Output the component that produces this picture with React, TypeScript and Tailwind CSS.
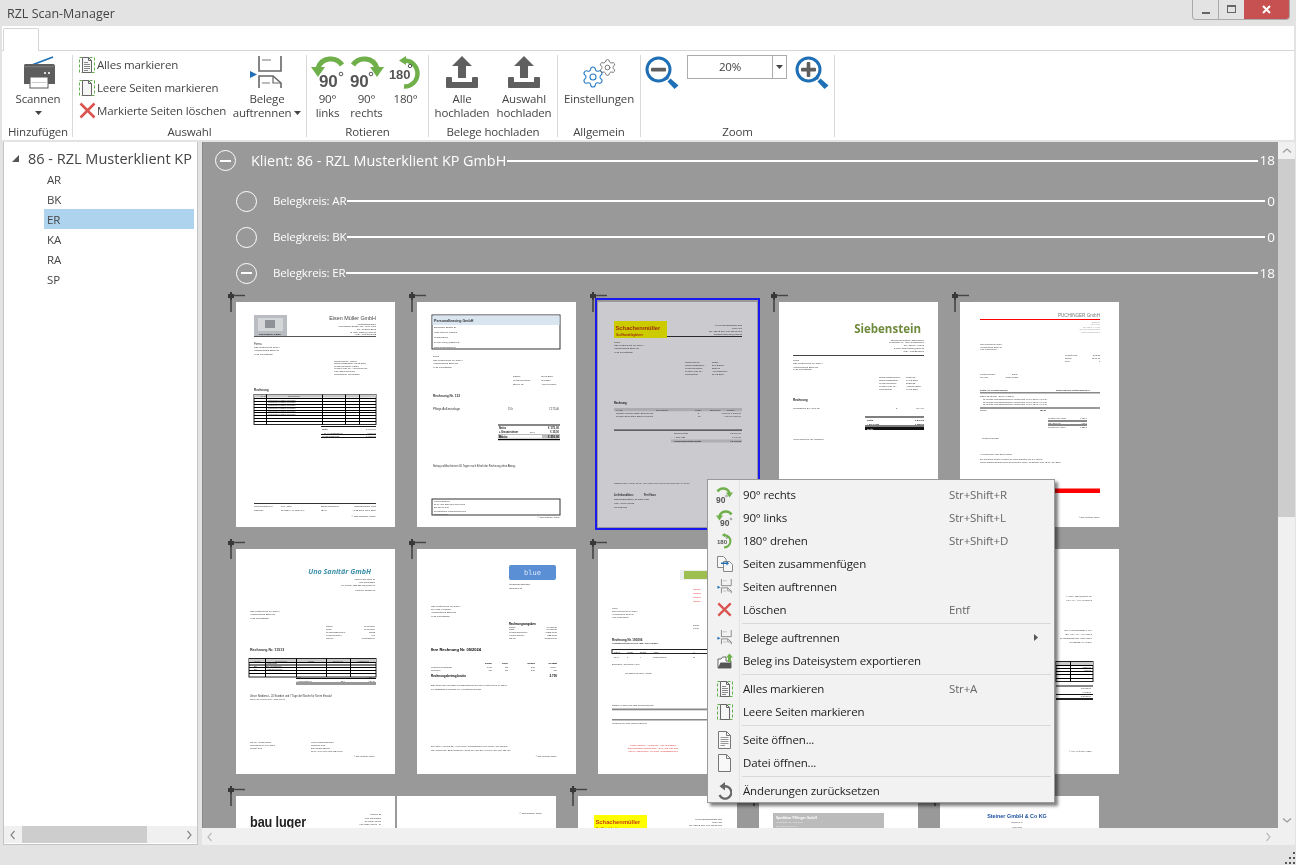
import { ReactNode } from "react";
import { Settings } from "lucide-react";

const Caret = ({ className = "" }: { className?: string }) => (
  <svg width="7" height="4" viewBox="0 0 7 4" className={className}>
    <polygon points="0,0 7,0 3.5,4" fill="#444" />
  </svg>
);

/* ---------- icons ---------- */

const ScanIcon = () => (
  <svg width="32" height="33" viewBox="0 0 32 33">
    <path d="M9 9 L30 1" stroke="#1e6fb5" strokeWidth="1.8" />
    <path d="M2 8 H30 A2 2 0 0 1 32 10 V28 H1 V10 A2 2 0 0 1 2 8Z" fill="#5d5d5d" />
    <rect x="1" y="10" width="30" height="1.3" fill="#777" />
    <rect x="7" y="21" width="18" height="11" fill="#fff" stroke="#5d5d5d" />
    <rect x="21" y="16" width="2" height="2" fill="#ddd" />
    <rect x="25" y="16" width="2" height="2" fill="#ddd" />
    <rect x="8.5" y="26" width="15" height="1" fill="#ccc" />
  </svg>
);

const RotLeft = ({ size = 34 }: { size?: number }) => (
  <svg width={size} height={(size * 32) / 34} viewBox="0 0 34 32" className="overflow-visible">
    <path d="M31 9 A13.5 13.5 0 0 0 7 12" stroke="#6fb04a" strokeWidth="5" fill="none" />
    <polygon points="0,11 14,11 7,21" fill="#6fb04a" />
    <text x="8" y="31" fontSize="17" fontWeight="700" fill="#555" fontFamily="'Liberation Sans',sans-serif">90</text>
    <circle cx="30" cy="18" r="1.8" stroke="#555" fill="none" />
  </svg>
);

const RotRight = ({ size = 34 }: { size?: number }) => (
  <svg width={size} height={(size * 32) / 34} viewBox="0 0 34 32" className="overflow-visible">
    <path d="M3 9 A13.5 13.5 0 0 1 27 12" stroke="#6fb04a" strokeWidth="5" fill="none" />
    <polygon points="20,11 34,11 27,21" fill="#6fb04a" />
    <text x="0" y="31" fontSize="17" fontWeight="700" fill="#555" fontFamily="'Liberation Sans',sans-serif">90</text>
    <circle cx="21" cy="18" r="1.8" stroke="#555" fill="none" />
  </svg>
);

const Rot180 = ({ size = 34 }: { size?: number }) => (
  <svg width={size} height={(size * 32) / 34} viewBox="0 0 34 32" className="overflow-visible">
    <path d="M16 4.5 A13 13 0 0 1 15 30.5" stroke="#6fb04a" strokeWidth="4.5" fill="none" />
    <polygon points="10,4.5 17,0 17,9" fill="#6fb04a" />
    <text x="0" y="23" fontSize="13" fontWeight="700" fill="#555" fontFamily="'Liberation Sans',sans-serif">180</text>
    <circle cx="21" cy="10" r="1.7" stroke="#555" fill="none" />
  </svg>
);

const SplitIcon = ({ size = 36 }: { size?: number }) => (
  <svg width={size} height={(size * 32) / 36} viewBox="0 0 36 32">
    <path d="M10 0 V15 H32 V0" stroke="#666" strokeWidth="1.6" fill="none" />
    <path d="M13 4 H22" stroke="#bbb" strokeWidth="2" />
    <polygon points="1,15 8,18.5 1,22" fill="#1e6fb5" />
    <path d="M10 32 V20 H24 L32 27 V32" stroke="#666" strokeWidth="1.6" fill="none" />
    <path d="M24 20 V27 H32" stroke="#666" strokeWidth="1.2" fill="none" />
    <path d="M13 27 H21" stroke="#bbb" strokeWidth="2" />
  </svg>
);

const UploadIcon = () => (
  <svg width="32" height="33" viewBox="0 0 32 33">
    <polygon points="16,0 26,10 20,10 20,22 12,22 12,10 6,10" fill="#5f5f5f" />
    <path d="M1 21 H5 A1 1 0 0 1 6 22 V26 H26 V22 A1 1 0 0 1 27 21 H31 A1 1 0 0 1 32 22 V31 A1 1 0 0 1 31 32 H1 A1 1 0 0 1 0 31 V22 A1 1 0 0 1 1 21Z" fill="#5f5f5f" />
  </svg>
);

const ZoomIcon = ({ plus }: { plus?: boolean }) => (
  <svg width="34" height="33" viewBox="0 0 34 33">
    <circle cx="13.5" cy="13.5" r="11.5" stroke="#1e6fb5" strokeWidth="3" fill="#fff" />
    <path d="M21 21 L23 23" stroke="#1e6fb5" strokeWidth="3" />
    <path d="M22.5 25.5 L25.5 22.5 L33.5 29.5 L29.5 33Z" fill="#1e6fb5" />
    <rect x="6" y="11.8" width="15" height="3.6" rx="1" fill="#5f5f5f" />
    {plus && <rect x="11.7" y="6" width="3.6" height="15" rx="1" fill="#5f5f5f" />}
  </svg>
);

const CrossIcon = ({ size = 17 }: { size?: number }) => (
  <svg width={size} height={size} viewBox="0 0 17 17">
    <path d="M1.5 1.5 L15.5 15.5 M15.5 1.5 L1.5 15.5" stroke="#d9534f" strokeWidth="2.6" />
  </svg>
);

const PageIcon = ({ lines, marked }: { lines?: boolean; marked?: boolean }) => (
  <svg width="16" height="18" viewBox="0 0 16 18">
    {marked && <rect x="0.5" y="1.5" width="15" height="15" fill="none" stroke="#5fb04a" strokeDasharray="3 2" />}
    <path d="M3.5 1.5 H9.5 L12.5 4.5 V16.5 H3.5Z" fill="#f6f6f6" stroke="#666" />
    <path d="M9.5 1.5 V4.5 H12.5" fill="none" stroke="#666" />
    {lines && <path d="M5 6.5 H9 M5 8.5 H11 M5 10.5 H11 M5 12.5 H11 M5 14.5 H9" stroke="#888" />}
  </svg>
);

const BigPage = ({ lines }: { lines?: boolean }) => (
  <svg width="15" height="18" viewBox="0 0 15 18">
    <path d="M1.5 0.5 H9.5 L13.5 4.5 V17.5 H1.5Z" fill="#f8f8f8" stroke="#777" />
    <path d="M9.5 0.5 V4.5 H13.5" fill="none" stroke="#777" />
    {lines && <path d="M3.5 6.5 H11.5 M3.5 8.5 H11.5 M3.5 10.5 H11.5 M3.5 12.5 H11.5 M3.5 14.5 H8" stroke="#999" />}
  </svg>
);

const MergeIcon = () => (
  <svg width="16" height="16" viewBox="0 0 16 16">
    <path d="M0.5 0.5 H6.5 L9 3 V11.5 H0.5Z" fill="#f6f6f6" stroke="#888" />
    <path d="M6.5 5.5 H12.5 L15.5 8.5 V15.5 H6.5Z" fill="#f6f6f6" stroke="#888" />
    <rect x="4" y="6.5" width="6" height="1.5" fill="#1e6fb5" />
    <polygon points="9.5,5 12,7.2 9.5,9.5" fill="#1e6fb5" />
  </svg>
);

const ExportIcon = () => (
  <svg width="16" height="16" viewBox="0 0 16 16">
    <path d="M1 6 H4 L5.5 4 H9 V8 H14 V15 H1Z" fill="#fff" stroke="#666" />
    <path d="M1 15 L3.5 9.5 H14 V15Z" fill="#555" />
    <polygon points="12.5,0.5 16,4.5 14,4.5 14,9 11,9 11,4.5 9,4.5" fill="#6fb04a" />
  </svg>
);

const UndoIcon = () => (
  <svg width="15" height="18" viewBox="0 0 15 18">
    <path d="M6.5 4.5 A6.2 6.2 0 1 1 2.5 13" stroke="#666" strokeWidth="2.3" fill="none" />
    <polygon points="8,0 8,8.5 2.5,4.2" fill="#666" />
  </svg>
);

/* ---------- ribbon ---------- */

const RibbonGroup = ({ label, width, children }: { label: string; width: string; children: ReactNode }) => (
  <>
    <div className={`${width} flex flex-col shrink-0`}>
      <div className="h-[70px] flex">{children}</div>
      <div className="h-[16px] leading-[16px] text-center text-[#444]">{label}</div>
    </div>
    <div className="w-px h-[82px] bg-[#d9d9d9] shrink-0" />
  </>
);

const LargeButton = ({ icon, lines, width, caret }: { icon: ReactNode; lines: string[]; width: string; caret?: boolean }) => (
  <div className={`${width} flex flex-col items-center shrink-0`}>
    <div className="h-[37px] flex items-start justify-center pt-px">{icon}</div>
    {lines.map((l, i) => (
      <div key={l} className="leading-[14px] text-[#444] whitespace-nowrap flex items-center gap-[3px]">
        {l}
        {caret && i === lines.length - 1 && <Caret />}
      </div>
    ))}
  </div>
);

const SmallButton = ({ icon, label }: { icon: ReactNode; label: string }) => (
  <div className="h-[23px] flex items-center gap-[1px] text-[#444] whitespace-nowrap">
    <div className="w-[18px] flex justify-center">{icon}</div>
    {label}
  </div>
);

const Ribbon = () => (
  <div className="h-[90px] border-t border-[#d6d6d6] flex pt-[4px] pl-[2px]">
    <RibbonGroup label="Hinzufügen" width="w-[68px]">
      <div className="w-full flex flex-col items-center">
        <div className="h-[37px] flex items-start pt-px pl-[2px]">
          <ScanIcon />
        </div>
        <div className="leading-[14px] text-[#444]">Scannen</div>
        <Caret className="mt-[5px]" />
      </div>
    </RibbonGroup>
    <RibbonGroup label="Auswahl" width="w-[233px]">
      <div className="pl-[5px] w-[165px] -mt-[2px]">
        <SmallButton icon={<PageIcon lines marked />} label="Alles markieren" />
        <SmallButton icon={<PageIcon marked />} label="Leere Seiten markieren" />
        <SmallButton icon={<CrossIcon />} label="Markierte Seiten löschen" />
      </div>
      <LargeButton width="w-[56px] ml-[1px]" icon={<SplitIcon />} lines={["Belege", "auftrennen"]} caret />
    </RibbonGroup>
    <RibbonGroup label="Rotieren" width="w-[121px]">
      <div className="flex pl-[2px] gap-[2px]">
        <LargeButton width="w-[37px]" icon={<RotLeft />} lines={["90°", "links"]} />
        <LargeButton width="w-[37px]" icon={<RotRight />} lines={["90°", "rechts"]} />
        <LargeButton width="w-[37px]" icon={<Rot180 />} lines={["180°"]} />
      </div>
    </RibbonGroup>
    <RibbonGroup label="Belege hochladen" width="w-[128px]">
      <div className="flex pl-[2px]">
        <LargeButton width="w-[62px]" icon={<UploadIcon />} lines={["Alle", "hochladen"]} />
        <LargeButton width="w-[62px]" icon={<UploadIcon />} lines={["Auswahl", "hochladen"]} />
      </div>
    </RibbonGroup>
    <RibbonGroup label="Allgemein" width="w-[82px]">
      <LargeButton
        width="w-full"
        icon={
          <div className="relative w-[36px] h-[31px] mt-[2px]">
            <Settings size={24} strokeWidth={1.1} className="absolute left-0 bottom-0 text-[#2a7cc7]" />
            <Settings size={19} strokeWidth={1.1} className="absolute right-0 top-0 text-[#666]" />
          </div>
        }
        lines={["Einstellungen"]}
      />
    </RibbonGroup>
    <RibbonGroup label="Zoom" width="w-[193px]">
      <div className="flex items-start pl-[4px] pt-[1px]">
        <ZoomIcon />
        <div className="ml-[8px] -mt-[1px] w-[100px] h-[24px] border border-[#ababab] flex text-[#444]">
          <div className="w-[84px] text-center leading-[22px]">20%</div>
          <div className="flex-1 border-l border-[#ababab] flex items-center justify-center">
            <Caret />
          </div>
        </div>
        <div className="ml-[8px]">
          <ZoomIcon plus />
        </div>
      </div>
    </RibbonGroup>
  </div>
);

/* ---------- document thumbnails, drawn as little pages ---------- */

const T = ({
  x,
  y,
  s = 2.4,
  c = "#333",
  b,
  a,
  i,
  f,
  children,
}: {
  x: number;
  y: number;
  s?: number;
  c?: string;
  b?: boolean;
  a?: "start" | "middle" | "end";
  i?: boolean;
  f?: string;
  children: ReactNode;
}) => (
  <text
    x={x}
    y={y}
    fontSize={s}
    fill={c}
    fontWeight={b ? 700 : 400}
    fontStyle={i ? "italic" : "normal"}
    textAnchor={a ?? "start"}
    fontFamily={f ?? "'Liberation Sans',sans-serif"}
    letterSpacing="0"
  >
    {children}
  </text>
);

const R = ({ x, y, w, h = 1, c = "#111" }: { x: number; y: number; w: number; h?: number; c?: string }) => (
  <rect x={x} y={y} width={w} height={h} fill={c} />
);

const Page = ({ children, height = 225, selected }: { children?: ReactNode; height?: number; selected?: boolean }) => (
  <svg width="159" height={height} viewBox={`0 0 159 ${height}`} className="block bg-white">
    <g className="blur-[0.3px]">{children}</g>
    {selected && <rect width="159" height={height} fill="#cbcbcf" className="mix-blend-multiply" />}
  </svg>
);

const Doc1 = () => (
  <Page>
    <rect x="18" y="13" width="33" height="21" fill="#b9bcc0" />
    <rect x="22" y="16" width="25" height="13" fill="#d5d6d8" />
    <rect x="29" y="18" width="10" height="8" fill="#8f9296" />
    <T x={34} y={33} s={2.4} b a="middle" c="#222">Eisen Müller GmbH</T>
    <T x={140} y={18} s={5.4} a="end" c="#444">Eisen Müller GmbH</T>
    <T x={140} y={22.5} a="end">Metallgroßhandel</T>
    <T x={140} y={25} a="end">Ledergasse Straße 191, 4600 Wels</T>
    <T x={140} y={28} a="end">Tel.: 07242/12345</T>
    <T x={140} y={30.5} a="end">E-Mail: müller@eisen.at</T>
    <T x={140} y={33} a="end">UID: ATU98765432</T>
    <R x={18} y={34} w={122} c="#555" />
    <T x={18} y={43} s={3}>Firma</T>
    <T x={18} y={46}>RZL Musterklient GmbH</T>
    <T x={18} y={49}>Hummelgrund Stock 30</T>
    <T x={18} y={52.5}>4911 Tumeltsham</T>
    {["Rechnung Nr.:   12345", "Rechnungsdatum:  02.03.2024", "Kundennummer:   15824", "Kunden UID-Nr.:  ATU99514001", "UID:   Steuernummer", "Lieferdatum:  02.03.2024"].map((l, n) => (
      <T key={l} x={98} y={59.5 + n * 2.6}>{l}</T>
    ))}
    <T x={18} y={89} s={3} b c="#333">Rechnung</T>
    <rect x="18" y="92.5" width="122" height="30" fill="none" stroke="#111" strokeWidth="0.9" />
    <R x={18} y={92.5} w={122} h={3} c="#ccc" />
    {[96, 99, 102, 105, 108, 110, 113, 116, 119].map((y) => (
      <R key={y} x={18} y={y} w={122} h={1} c="#000" />
    ))}
    {[30, 86, 109, 123].map((x) => (
      <R key={x} x={x} y={92.5} w={1} h={30} c="#000" />
    ))}
    <T x={24} y={95} s={2}>Art.-Nr.</T>
    <T x={58} y={95} s={2} a="middle">Bezeichnung</T>
    {[98.5, 101, 104, 107, 109.5, 112.5].map((y) => (
      <T key={y} x={32} y={y} s={2} c="#333">Metallwaren Position Lieferung</T>
    ))}
    <R x={85} y={124} w={55} h={1} />
    <T x={86} y={127.5} s={2.2} b>Netto</T>
    <T x={86} y={131.5} s={2.2}>+ 20 % Umsatzsteuer</T>
    <T x={140} y={127.5} s={2.2} a="end">€ 1.000,00</T>
    <T x={140} y={131.5} s={2.2} a="end">€ 200,00</T>
    <R x={85} y={132} w={55} h={1} />
    <T x={86} y={134.5} s={2.2}>Rechnungsbetrag</T>
    <T x={140} y={134.5} s={2.2} a="end">€ 1.200,00</T>
    <R x={85} y={135} w={55} h={1} />
    <R x={18} y={201} w={122} h={1} c="#333" />
    <T x={18} y={205}>Lieferkonditionen:</T>
    <T x={45} y={205}>Frei Haus</T>
    <T x={85} y={205}>Bankverbindung:</T>
    <T x={140} y={205} a="end">Raiffeisenbank Wels</T>
    <T x={18} y={208.5}>Zahlung:</T>
    <T x={45} y={208.5}>30 Tage / 14 Tage 2 %</T>
    <T x={85} y={208.5}>IBAN</T>
    <T x={140} y={208.5} a="end">AT12 3456 7890 1234</T>
    <T x={140} y={215} a="end">© RZL Software GmbH</T>
  </Page>
);

const Doc2 = () => (
  <Page>
    <rect x="15" y="13" width="128" height="34" fill="#fff" stroke="#333" strokeWidth="1" />
    <R x={15.5} y={13.5} w={127} h={9.5} c="#d9e5f0" />
    <T x={17} y={19.5} s={3.6} b c="#333">Personalleasing GmbH</T>
    {["Bauweiser Straße 24", "4550 Ried im Innkreis", "07752 23456", "E-Mail: mail@leasing.at", "www.mehrleasing.at"].map((l, n) => (
      <T key={l} x={17} y={26 + n * 5}>{l}</T>
    ))}
    <T x={16} y={55}>Firma</T>
    <T x={16} y={58.5}>RZL Musterklient KP GmbH</T>
    <T x={16} y={62}>Hummelgrund Stock 30</T>
    <T x={16} y={66}>4911     Tumeltsham</T>
    {[["Datum:", "02.05.2024"], ["Kundennummer:", "ID 00534"], ["Steuer-ID:", "ATU94540506"]].map(([a, b], n) => (
      <g key={a}>
        <T x={96} y={74.5 + n * 4}>{a}</T>
        <T x={124} y={74.5 + n * 4}>{b}</T>
      </g>
    ))}
    <T x={16} y={94.5} s={3.2} b>Rechnung Nr. 123</T>
    <T x={16} y={107.5} s={3}>Pflege Außenanlage</T>
    <T x={91} y={107.5} s={2.6}>15 h</T>
    <T x={142} y={107.5} s={2.6} a="end">€   175,00</T>
    <R x={81} y={122.5} w={62} h={1} />
    <T x={82} y={126.5} s={2.8} b c="#222">Netto</T>
    <T x={142} y={126.5} s={2.8} b a="end" c="#222">€ 175,00</T>
    <T x={82} y={131} s={2.6} b c="#222">+ Umsatzsteuer</T>
    <T x={113} y={131} s={2.4}>20%</T>
    <T x={142} y={131} s={2.6} b a="end" c="#222">€ 35,00</T>
    <R x={81} y={132} w={62} h={4.6} c="#bbb" />
    <rect x="86" y="133" width="39" height="2.8" fill="#fff" />
    <T x={82} y={135.8} s={2.8} b c="#111">Brutto</T>
    <T x={142} y={135.8} s={2.8} b a="end" c="#111">€ 210,00</T>
    <R x={81} y={137} w={62} h={1.2} c="#000" />
    <T x={16} y={165} s={2.6}>Betrag zahlbar binnen 30 Tagen nach Erhalt der Rechnung ohne Abzug.</T>
    <rect x="15" y="197" width="128" height="16" fill="#fff" stroke="#333" strokeWidth="1" />
    {["Kontoverbindung", "IBAN AT50 2032 0000 1234 5678", "BIC SPAMAT3S", "Gerichtsstand: Landesgericht Ried", "FN 12 345 678"].map((l, n) => (
      <T key={l} x={17} y={200 + n * 3.2} s={2.1} c="#333">{l}</T>
    ))}
    <T x={143} y={215.5} s={2.2} a="end">© RZL Software GmbH</T>
  </Page>
);

const Schachen = () => (
  <>
    <rect x="16" y="19" width="53" height="17" fill="#ffff00" />
    <T x={17.5} y={27.5} s={5.8} b c="#c83a10">Schachenmüller</T>
    <T x={18} y={33.5} s={2.8} b c="#c83a10">Großhandelsgärtner</T>
    <T x={144} y={24} a="end">Linzer Bundesstraße 236</T>
    <T x={144} y={27} a="end">4600 Linz</T>
    <T x={144} y={30} a="end">Tel. 05192 888, Fax 05192 887</T>
    <T x={144} y={33} a="end">schachenmueller@blick.at</T>
    <R x={69} y={34} w={75} c="#333" />
  </>
);

const Doc3 = () => (
  <Page selected>
    <Schachen />
    <T x={16} y={41}>Firma</T>
    <T x={16} y={44}>RZL Musterklient KP GmbH</T>
    <T x={16} y={47}>Hummelgrund Stock 30</T>
    <T x={16} y={51}>4911 Tumeltsham</T>
    {[["Rechnung Nr.:", "13889"], ["Rechnungsdatum:", "30.03.2024"], ["Kundennummer:", "238468"], ["Kunden UID-Nr.:", "ATU48536800"], ["Lieferdatum:", "30.03.2024"]].map(([a, b], n) => (
      <g key={a}>
        <T x={87} y={61 + n * 3}>{a}</T>
        <T x={114} y={61 + n * 3}>{b}</T>
      </g>
    ))}
    <T x={16} y={102} s={2.6} b c="#222">Rechnung</T>
    <R x={16} y={106} w={128} h={3.2} c="#d8d8d8" />
    <T x={18} y={108.5} s={2.1}>Art.-Nr.</T>
    <T x={58} y={108.5} s={2.1}>Bezeichnung</T>
    <T x={97} y={108.5} s={2.1}>Menge</T>
    <T x={112} y={108.5} s={2.1}>Einzelpreis</T>
    <T x={129} y={108.5} s={2.1}>Gesamt</T>
    <T x={18} y={112} s={2.2}>1234567  Grünlilien Blatt- Bromelienart</T>
    <T x={18} y={114.5} s={2.2}>7771890  Bekrystilien Baum 80 sortiert</T>
    <T x={100} y={112} s={2.2}>5</T>
    <T x={143} y={112} s={2.2} a="end">€ 500,00  €  1.500,00</T>
    <T x={100} y={114.5} s={2.2}>15</T>
    <T x={143} y={114.5} s={2.2} a="end">€ 50,00  €  500,00</T>
    <R x={16} y={127.5} w={128} h={1.2} c="#444" />
    <T x={76} y={132} s={2.3}>Summe Netto</T>
    <T x={143} y={132} s={2.3} a="end">€    2.000,00</T>
    <T x={76} y={136} s={2.3}>+ 20% USt</T>
    <T x={143} y={136} s={2.3} a="end">€    400,00</T>
    <R x={73} y={137.5} w={71} h={3} c="#dcdcdc" />
    <T x={76} y={140} s={2.3} b>Rechnungsbetrag Brutto</T>
    <T x={143} y={140} s={2.3} a="end" b>€    2.400,00</T>
    <T x={16} y={182} s={2.3} c="#444">Zahlbar ohne Abzug. IBAN: AT99 1200 0000 0000 0000  BIC: BKAUATWW</T>
    <T x={16} y={194} s={2.6} b>Lieferkondition:</T>
    <T x={46} y={194} s={2.6} b>Frei Haus</T>
    <T x={16} y={198} s={2.4}>Zahlungskondition: 30 Tage netto</T>
    <T x={16} y={202} s={2.4}>UID: ATU99900011</T>
    <T x={16} y={206} s={2.4}>FN 123456a</T>
  </Page>
);

const Doc4 = () => (
  <Page>
    <T x={142} y={31} s={11.5} b c="#6f8a3c" f="'Open Sans',sans-serif" a="end">Siebenstein</T>
    {["Steinmetzmeisterei Eisenhirner", "Feldgasse 61, 4710 Grieskirchen", "Tel.: 07248 / 64345", "E-Mail: siebenstein@stein.at", "UID: ATU12345678"].map((l, n) => (
      <T key={l} x={145} y={38.5 + n * 2.9} a="end">{l}</T>
    ))}
    <R x={14} y={53} w={131} c="#444" />
    <T x={14} y={59}>Firma</T>
    <T x={14} y={62}>RZL Musterklient KP GmbH</T>
    <T x={14} y={65.5}>Hummelgrund Stock 30</T>
    <T x={14} y={68}>4911 Tumeltsham</T>
    {[["Rechnungsnummer:", "0815468"], ["Rechnungsdatum:", "04.05.2024"], ["Kundennummer:", "1530012"], ["Kunden UID-Nr.:", "ATU88143504"], ["Lieferdatum:", "04.05.2024"]].map(([a, b], n) => (
      <g key={a}>
        <T x={100} y={75.5 + n * 3.2}>{a}</T>
        <T x={127} y={75.5 + n * 3.2}>{b}</T>
      </g>
    ))}
    <T x={14} y={99} s={3} b c="#222">Rechnung</T>
    <T x={14} y={107} s={2.4}>Grundstufen 20 x 100 cm</T>
    <T x={117} y={107} s={2.4}>2</T>
    <T x={145} y={107} s={2.4} a="end">70 x 84</T>
    <R x={86} y={114.5} w={59} h={1} c="#000" />
    <T x={88} y={118.5} s={2.4} b c="#222">Netto</T>
    <T x={145} y={118.5} s={2.4} a="end" b c="#222">€ 840,00</T>
    <T x={88} y={122.5} s={2.4} b c="#222">+ 20 % Ust</T>
    <T x={145} y={122.5} s={2.4} a="end" b c="#222">€ 168,00</T>
    <R x={86} y={123.5} w={59} h={1} c="#000" />
    <R x={86} y={125} w={59} h={3} c="#111" />
    <T x={88} y={127.6} s={2.4} c="#fff">Brutto</T>
    <T x={14} y={137.5} s={2.4}>Vielen Dank für Ihr Vertrauen</T>
  </Page>
);

const Doc5 = () => (
  <Page>
    <T x={140} y={15} s={4.6} a="end" c="#777">PUCHINGER GmbH</T>
    <R x={20} y={17} w={120} h={1} c="#ff0000" />
    {["Bäckerei", "4600 Wels", "Tel: 07242 / 44455", "office@puchinger.com", "www.puchinger.com"].map((l, n) => (
      <T key={l} x={140} y={20.5 + n * 2.6} s={2.1} a="end" c="#999">{l}</T>
    ))}
    {["RZL Musterklient GmbH", "Hummelgrund Stock 30", "4911 Tumeltsham"].map((l, n) => (
      <T key={l} x={20} y={43 + n * 2.6} s={2.1}>{l}</T>
    ))}
    <T x={105} y={53.5} s={2.1}>Rechnung Nr:</T>
    <T x={140} y={53.5} s={2.1} a="end">26/5/68</T>
    <T x={105} y={56.5} s={2.1}>Datum:</T>
    <T x={140} y={56.5} s={2.1} a="end">01.06.18</T>
    <T x={105} y={59.5} s={2.1}>Seite:</T>
    <T x={140} y={59.5} s={2.1} a="end">1</T>
    <T x={20} y={72.5} s={2.1}>Kundennummer:</T>
    <T x={52} y={72.5} s={2.1}>26510</T>
    <T x={20} y={75.5} s={2.1}>Ihre UID:</T>
    <T x={45} y={75.5} s={2.1}>ATU50424890</T>
    <T x={20} y={88.5} s={2.1} b c="#333">Datum      Art.    KZ          Bezeichnung</T>
    <T x={96} y={88.5} s={2.1} b c="#333">Menge  Einzelpr.  Betrag   MWST/E %</T>
    <R x={20} y={90} w={120} h={1.5} c="#888" />
    <T x={20} y={95} s={2}>Datum: 08.05.2024 - Beleg: 40.215.00</T>
    {[98, 100.5, 103].map((y) => (
      <T key={y} x={23} y={y} s={2}>03.03.2021   1010 Backmischung    1 Vollkorn Brot    40,00   1.180,5 €  34,6     20</T>
    ))}
    <R x={20} y={105.5} w={120} h={1} c="#333" />
    <T x={20} y={108.5} s={2}>Summe</T>
    <T x={80} y={108.5} s={2} b>180,00</T>
    <T x={88} y={117} s={2.1}>Gesamt exkl. MwSt</T>
    <T x={127} y={117} s={2.1} a="end">€ 184,6</T>
    <R x={88} y={118.5} w={39} h={1} />
    <T x={88} y={121.5} s={2.1}>zzgl. 20% Ust</T>
    <T x={127} y={121.5} s={2.1} a="end">€ 36,9</T>
    <R x={88} y={122.5} w={39} h={1} />
    <T x={88} y={125.5} s={2.1}>Gesamt inkl. MwSt</T>
    <T x={127} y={125.5} s={2.1} a="end">€ 221,5</T>
    <T x={22} y={137} s={2.1}>Rechnung gesamt</T>
    <T x={20} y={153} s={2.1}>An Musterklient Frau Silvia Winkler</T>
    <T x={20} y={158} s={2.1}>Die Rechnung beträgt, erhalten Sie einen Nachlass von 2 % Skonto.</T>
    <T x={20} y={161} s={2.1}>Unsere Bankverbindung lautet auf Puchinger GmbH, Sparkasse Wels, IBAN AT04 2015</T>
    <R x={20} y={186.5} w={120} h={4.5} c="#ff0000" />
    <T x={140} y={216} s={2.1} a="end">© RZL Software GmbH</T>
  </Page>
);

const Doc6 = () => (
  <Page>
    <T x={135} y={25} s={7.2} b i c="#3d8fa8" a="end" f="'Open Sans',sans-serif">Uno Sanitär GmbH</T>
    {["Hammergrub Stock 30", "4911 Tumeltsham", "Tel: 07752 / 1212 253 mail@office.at"].map((l, n) => (
      <T key={l} x={139} y={31 + n * 2.8} s={2.1} a="end">{l}</T>
    ))}
    <T x={139} y={41.5} s={2.2} a="end">www.uno-sanitaer.at</T>
    <T x={14} y={62.5}>RZL Musterklient KP GmbH</T>
    <T x={14} y={66}>Hummelgrund Stock 30</T>
    <T x={14} y={70}>4911 Tumeltsham</T>
    {[["Datum:", "07.05.2024"], ["Fällig:", "07.05.2024"], ["Rechnungsnummer:", "11513"], ["Kundennummer:", "901"], ["UID-Nr:", "ATU50516989"]].map(([a, b], n) => (
      <g key={a}>
        <T x={90} y={78 + n * 3} s={2.2}>{a}</T>
        <T x={139} y={78 + n * 3} s={2.2} a="end">{b}</T>
      </g>
    ))}
    <T x={14} y={101.5} s={3.6} b c="#333">Rechnung Nr. 11513</T>
    <rect x="13" y="109.5" width="127" height="18.5" fill="none" stroke="#222" strokeWidth="1" />
    <R x={13} y={110} w={127} h={3} c="#ccc" />
    {[113, 115.5, 118, 121, 124].map((y) => (
      <R key={y} x={13} y={y} w={127} h={1} c="#000" />
    ))}
    {[29, 60, 90, 114].map((x) => (
      <R key={x} x={x} y={109.5} w={1} h={18.5} c="#000" />
    ))}
    <T x={21} y={112.5} s={2} a="middle">Art.-Nr.</T>
    <T x={45} y={112.5} s={2} a="middle">Bezeichnung</T>
    <T x={75} y={112.5} s={2} a="middle">Menge</T>
    <T x={102} y={112.5} s={2} a="middle">Einzelpreis</T>
    <T x={127} y={112.5} s={2} a="middle">Gesamtpreis</T>
    <T x={30} y={115} s={2}>Wasserhahn</T>
    <T x={18} y={118} s={2}>BS</T>
    <T x={30} y={118} s={2}>Ein Arbeitsstunde</T>
    <T x={18} y={120.8} s={2}>BS</T>
    <T x={30} y={120.8} s={2}>Anfahrtspauschale</T>
    <R x={60} y={129} w={80} h={1} />
    <T x={60} y={128.8} s={2}>Netto</T>
    <T x={139} y={128.8} s={2} a="end">€   120,00</T>
    <T x={60} y={132.6} s={2}>+ Mehrwertsteuer</T>
    <T x={105} y={132.6} s={2}>20%</T>
    <T x={139} y={132.6} s={2} a="end">€   24,00</T>
    <R x={60} y={133} w={80} h={3} c="#999" />
    <T x={14} y={147.5} s={2.6}>Unser Notdienst - 24 Stunden und 7 Tage die Woche für Sie im Einsatz!</T>
    <T x={14} y={150.5} s={2.2}>Rufen Sie uns an 0664 / 123 456 78</T>
    <T x={14} y={193.5} s={2.1}>UID-Nr.: ATU56918190</T>
    <T x={14} y={196.5} s={2.1}>Firmenbuch Nr.: 196 728 w</T>
    <T x={14} y={199.5} s={2.1}>Gericht: Ried</T>
    <T x={75} y={193.5} s={2.1}>Unsere Bankverbindung:</T>
    <T x={75} y={196.5} s={2.1}>Raiffeisen Ried</T>
    <T x={75} y={199.5} s={2.1}>BIC: RZOOAT2L510</T>
    <T x={75} y={202.5} s={2.1}>IBAN: AT77 3400 0000 0123 1453</T>
    <T x={139} y={207.5} s={2.1} a="end">© RZL Software GmbH</T>
  </Page>
);

const Doc7 = () => (
  <Page>
    <rect x="92" y="16" width="47" height="15" rx="2" fill="#5a8fd6" />
    <T x={115.5} y={26} s={7} a="middle" c="#dce8f7" f="'DejaVu Sans Mono',monospace">blue</T>
    <T x={92} y={36}>Ihr Bürodienstleister</T>
    <T x={92} y={40}>www.blue.at</T>
    <T x={14} y={57.5}>RZL Musterklient KP GmbH</T>
    <T x={14} y={60.5}>Zu Hand. Kontrolor</T>
    <T x={14} y={64}>Hummelgrund Stock 30</T>
    <T x={14} y={68}>4911 Tumeltsham</T>
    <T x={92} y={75.5} s={2.8} b c="#000">Rechnungsangaben</T>
    {[["Datum:", "09.05.2024"], ["Fällig:", "24.05.2024"], ["Rechnungsnummer:", "AR20240510"], ["Kundennummer:", "RE248100"], ["UID-Nr:", "ATU58413661"]].map(([a, b], n) => (
      <g key={a}>
        <T x={92} y={78.5 + n * 2.9} s={2.1}>{a}</T>
        <T x={140} y={78.5 + n * 2.9} s={2.1} a="end">{b}</T>
      </g>
    ))}
    <T x={14} y={101.5} s={4} b c="#000">Ihre Rechnung Nr. 09/2024</T>
    <T x={118} y={115} s={2.4} a="end" b c="#000">Menge</T>
    <T x={75} y={115} s={2.4} a="end" b c="#000">Einzel</T>
    <T x={91} y={115} s={2.4} a="end" b c="#000">Einh.</T>
    <T x={140} y={115} s={2.4} a="end" b c="#000">Gesamt</T>
    <T x={14} y={118.5} s={2.1}>Customer Relationship</T>
    <T x={14} y={121.5} s={2.1}>Gutschein</T>
    <T x={75} y={118.5} s={2.1} a="end">1.000</T>
    <T x={75} y={121.5} s={2.1} a="end">-100</T>
    <T x={91} y={118.5} s={2.1} a="end">Stk</T>
    <T x={91} y={121.5} s={2.1} a="end">Stk</T>
    <T x={118} y={118.5} s={2.1} a="end">2,50</T>
    <T x={118} y={121.5} s={2.1} a="end">-2,50</T>
    <T x={140} y={118.5} s={2.1} a="end">2.500,-</T>
    <T x={140} y={121.5} s={2.1} a="end">-250</T>
    <T x={14} y={128} s={3} b c="#000">Rechnungsbetrag brutto</T>
    <T x={140} y={128} s={3} b a="end" c="#000">2.700</T>
    <T x={14} y={137} s={2.2}>Bitte zahlen Sie innerhalb des Zahlungsziels auf unser Konto binnen 14 Tagen.</T>
    <T x={14} y={141} s={2.2}>per Lastschrift den Betrag der Vereinbarung gemäß.</T>
    <T x={14} y={197.5} s={2.1} c="#333">blue GmbH | Seefeld 25A | 4600 Wels | Geschäftsführer: Max Muster | FN 123456a</T>
    <T x={14} y={201.5} s={2.1} c="#333">UID ATU123456 | Bankverbindung: AT12 3456 | BIC: BKAUATWW | Tel: 0664 123 456</T>
    <T x={140} y={207.5} s={2.1} a="end">© RZL Software GmbH</T>
  </Page>
);

const Doc8 = () => (
  <Page>
    <rect x="82" y="21" width="40" height="10" fill="#eee" />
    <rect x="86" y="22" width="36" height="8" fill="#9cbf4f" />
    {[41, 45, 48.5, 52.5].map((y) => (
      <T key={y} x={95} y={y} s={2.4} c="#e03030">Lindner</T>
    ))}
    <T x={14} y={59.5} s={2.1}>Firma</T>
    <T x={14} y={62.5} s={2.1}>RZL Musterklient KP GmbH</T>
    <T x={14} y={65.5} s={2.1}>Hummelgrund Stock 30</T>
    <T x={14} y={69} s={2.1}>4911 Tumeltsham</T>
    <T x={95} y={76.5} s={2.1}>Datum</T>
    <T x={95} y={80} s={2.1}>Kunde</T>
    <T x={14} y={91.5} s={3} b c="#222">Rechnung Nr. 190306</T>
    <T x={14} y={94.5} s={2} b>Leistungszeitraum von 30.04.2024 bis 31.05.2024</T>
    <rect x="14" y="100.5" width="145" height="4" fill="#fff" stroke="#222" strokeWidth="1" />
    <T x={16} y={103.5} s={2}>Datum</T>
    <T x={29} y={103.5} s={2}>Menge</T>
    <T x={42} y={103.5} s={2}>Einheit</T>
    <T x={55} y={103.5} s={2}>Artikel</T>
    <T x={95} y={103.5} s={2}>%</T>
    <T x={16} y={109} s={2}>30.04</T>
    <T x={29} y={109} s={2}>1</T>
    <T x={42} y={109} s={2}>x</T>
    <T x={55} y={109} s={2}>Grabbetreuung</T>
    <T x={95} y={109} s={2}>10</T>
    <T x={14} y={116} s={2.1}>Besondere Anmerkung: Keine</T>
    <T x={27} y={124.5} s={2.1}>Wir danken für Ihren Auftrag!</T>
    <T x={14} y={157} s={2.1}>Zahlbar 14 Tage netto nach Rechnungserhalt</T>
    <R x={14} y={159.5} w={145} h={1.8} c="#888" />
    <R x={14} y={170} w={145} h={1.5} c="#888" />
    <T x={14} y={174.5} s={2.1}>Rechnung von Frau Lindner Gärtnerei</T>
    <T x={55} y={197} s={2} a="middle" c="#e03030">Lindner Gärtnerei - Wiesweg 30 - 4911 Tumeltsham</T>
    <T x={55} y={200} s={2} a="middle" c="#e03030">Bankverbindung: Raiffeisenbank - IBAN AT12 3456 7890</T>
    <T x={55} y={203} s={2} a="middle" c="#e03030">UID-Nr. ATU12345678 - FN 34521 - Gerichtsstand Ried</T>
  </Page>
);

const Doc10 = () => (
  <Page>
    {([["E-Mail: mail@muster.at", 48], ["UID-Nr.: ATU12345678", 51.5], ["Ihre Kundennummer: 901", 82], ["Ihre UID-Nr.: ATU70012", 86], ["Rechnungsdatum: 14.09.2021", 90], ["Rechnung Nr: 96421", 94]] as [string, number][]).map(([l, y]) => (
      <T key={l} x={132} y={y} s={2.7} a="end" f="'Liberation Serif',serif">{l}</T>
    ))}
    <rect x="96" y="112.5" width="37" height="20" fill="none" stroke="#222" strokeWidth="1" />
    <R x={96} y={113} w={37} h={3} c="#ccc" />
    {[116, 119, 122, 125, 129].map((y) => (
      <R key={y} x={96} y={y} w={37} h={1} c="#000" />
    ))}
    <R x={110} y={112.5} w={1} h={20} c="#000" />
    <T x={131} y={118.6} s={2.2} a="end">1.350,00</T>
    <T x={131} y={121.7} s={2.2} a="end">750,00</T>
    <R x={96} y={136.5} w={37} h={1} />
    <T x={131} y={140} s={2.2} a="end">€   3.015,00</T>
    <T x={131} y={144} s={2.2} a="end">€   603,00</T>
    <R x={96} y={145} w={37} h={1} />
    <T x={131} y={148} s={2.2} a="end">€   3.618,00</T>
    <R x={96} y={149} w={37} h={2} c="#222" />
    <T x={132} y={203} s={2.4} a="end" f="'Liberation Serif',serif">© RZL Software GmbH</T>
  </Page>
);

const BauLuger = () => (
  <Page height={32}>
    <text x={14} y={31} fontSize={15} fontWeight={700} fill="#222" fontFamily="'Liberation Sans',sans-serif" textLength={56} lengthAdjust="spacingAndGlyphs">
      bau luger
    </text>
    <T x={145} y={19} s={2.1} a="end">Ortsweg 25</T>
    <T x={145} y={23} s={2.1} a="end">4910 Tumeltsham</T>
    <T x={145} y={26} s={2.1} a="end">Tel 07752 / 12345</T>
    <T x={145} y={29} s={2.1} a="end">Fax 07752 / 12345 - 10</T>
  </Page>
);

const Blank2 = () => (
  <Page height={32}>
    <T x={145} y={18} s={2.2} a="end">© RZL Software GmbH</T>
  </Page>
);

const Doc11 = () => (
  <Page height={32}>
    <Schachen />
  </Page>
);

const Doc12 = () => (
  <Page height={32}>
    <rect x="14" y="17" width="111" height="15" fill="#bbb" />
    <T x={17} y={23} s={3.4} b c="#fff">Spedition Pillinger GmbH</T>
    <T x={17} y={27} s={2.2} c="#eee">Hauptstraße 12, 4600 Wels</T>
    <T x={17} y={30.5} s={2.2} c="#eee">Tel: 07242 / 55 66 77</T>
  </Page>
);

const Doc13 = () => (
  <Page height={32}>
    <T x={77} y={22} s={5.4} b c="#1f4fa0" a="middle">Steiner GmbH & Co KG</T>
    <T x={77} y={27} s={2.1} a="middle">Steinweg 14</T>
    <T x={77} y={31.5} s={2.1} a="middle">4600 Wels</T>
  </Page>
);

const Pin = () => (
  <svg width="20" height="21" viewBox="0 0 20 21" className="absolute -left-[11px] -top-[11px]">
    <path d="M5 0.5 H7 V2.5 H9 V6.5 H7 V8.5 H5 V6.5 H3 V2.5 H5Z" fill="#383838" transform="translate(0,0.5)" />
    <path d="M8 4.5 H20" stroke="#444" strokeWidth="1.4" />
    <path d="M6 8 V21" stroke="#444" strokeWidth="1.6" />
  </svg>
);

const Thumb = ({ children, pin = true, selected }: { children: ReactNode; pin?: boolean; selected?: boolean }) => (
  <div className="relative w-[159px] shrink-0">
    {selected && <div className="absolute -left-[3px] -top-[4px] -right-[3px] -bottom-[3px] border-[2.5px] border-[#1a1aee]" />}
    {children}
    {pin && <Pin />}
  </div>
);

/* ---------- page body ---------- */

const GroupHeader = ({ open, label, count, big }: { open?: boolean; label: string; count: number; big?: boolean }) => (
  <div className={big ? "h-[21px] flex items-center pl-[12px] pr-[3px]" : "h-[36px] flex items-center pl-[33px] pr-[3px]"}>
    <div className="w-[21px] h-[21px] rounded-full border-[1.5px] border-white flex items-center justify-center shrink-0">
      {open && <div className="w-[11px] h-[2px] bg-white" />}
    </div>
    <span className={big ? "ml-[15px] text-[14.4px] tracking-normal text-white whitespace-nowrap" : "ml-[16px] text-white whitespace-nowrap"}>{label}</span>
    <div className="flex-1 h-[2px] bg-white ml-px" />
    <span className="ml-[2px] text-[13.5px] tracking-normal text-white">{count}</span>
  </div>
);

const ContextItem = ({ icon, label, shortcut, arrow }: { icon?: ReactNode; label: string; shortcut?: string; arrow?: boolean }) => (
  <div className="h-[23px] flex items-center text-[#222]">
    <div className="w-[31px] flex justify-center shrink-0">{icon}</div>
    <div className="w-[209px] pl-[3px] whitespace-nowrap">{label}</div>
    <div className="text-[#666] flex-1 whitespace-nowrap">{shortcut}</div>
    {arrow && (
      <svg width="4" height="7" viewBox="0 0 4 7" className="mr-[16px]">
        <polygon points="0,0 4,3.5 0,7" fill="#555" />
      </svg>
    )}
  </div>
);

const MenuSep = () => (
  <div className="h-[5px] flex items-center pl-[33px] pr-[3px]">
    <div className="h-px w-full bg-[#d8d8d8]" />
  </div>
);

const ContextMenu = () => (
  <div className="absolute left-[707px] top-[479px] w-[348px] h-[324px] bg-[#f2f2f2] border border-[#9a9a9a] pt-[3px] shadow-[3px_3px_3px_rgba(0,0,0,0.5)]">
    <div className="absolute left-[31px] top-0 bottom-0 w-px bg-[#e4e4e4]" />
    <div className="pl-px">
      <ContextItem icon={<RotRight size={17} />} label="90° rechts" shortcut="Str+Shift+R" />
      <ContextItem icon={<RotLeft size={17} />} label="90° links" shortcut="Str+Shift+L" />
      <ContextItem icon={<Rot180 size={16} />} label="180° drehen" shortcut="Str+Shift+D" />
      <ContextItem icon={<MergeIcon />} label="Seiten zusammenfügen" />
      <ContextItem icon={<SplitIcon size={16} />} label="Seiten auftrennen" />
      <ContextItem icon={<CrossIcon size={15} />} label="Löschen" shortcut="Entf" />
      <MenuSep />
      <ContextItem icon={<SplitIcon size={16} />} label="Belege auftrennen" arrow />
      <ContextItem icon={<ExportIcon />} label="Beleg ins Dateisystem exportieren" />
      <MenuSep />
      <ContextItem icon={<PageIcon lines marked />} label="Alles markieren" shortcut="Str+A" />
      <ContextItem icon={<PageIcon marked />} label="Leere Seiten markieren" />
      <MenuSep />
      <ContextItem icon={<BigPage lines />} label="Seite öffnen..." />
      <ContextItem icon={<BigPage />} label="Datei öffnen..." />
      <MenuSep />
      <ContextItem icon={<UndoIcon />} label="Änderungen zurücksetzen" />
    </div>
  </div>
);

const Chevron = ({ d, className = "" }: { d: string; className?: string }) => (
  <svg width="10" height="10" viewBox="0 0 10 10" className={className}>
    <path d={d} stroke="currentColor" strokeWidth="1.2" fill="none" />
  </svg>
);

const Tree = () => (
  <div className="w-[195px] bg-white border-x border-b border-[#c4c4c4] flex flex-col shrink-0">
    <div className="flex-1 pt-[6px]">
      <div className="h-[21px] flex items-center pl-[8px] text-[14.5px] tracking-normal text-[#444] whitespace-nowrap">
        <svg width="7" height="7" viewBox="0 0 7 7">
          <polygon points="7,0 7,7 0,7" fill="#555" />
        </svg>
        <span className="ml-[9px]">86 - RZL Musterklient KP</span>
      </div>
      {["AR", "BK", "ER", "KA", "RA", "SP"].map((k) => (
        <div key={k} className={`h-[20px] ml-[40px] mr-[3px] pl-[3px] leading-[22px] text-[#444] ${k === "ER" ? "bg-[#aed3ee]" : ""}`}>
          {k}
        </div>
      ))}
    </div>
    <div className="h-[17px] mb-px flex items-center bg-[#f0f0f0] text-[#888]">
      <Chevron d="M6.5 1 L3 5 L6.5 9" className="ml-[4px]" />
      <div className="ml-[4px] w-[125px] h-full bg-[#cdcdcd]" />
      <Chevron d="M3.5 1 L7 5 L3.5 9" className="ml-auto mr-[3px]" />
    </div>
  </div>
);

const Documents = () => (
  <div className="flex-1 bg-[#999999] overflow-hidden border-l border-[#8a8a8a] relative">
    <div className="pt-[8px]">
      <GroupHeader big open label="Klient: 86 - RZL Musterklient KP GmbH" count={18} />
    </div>
    <div className="pt-[12px]">
      <GroupHeader label="Belegkreis: AR" count={0} />
      <GroupHeader label="Belegkreis: BK" count={0} />
      <GroupHeader open label="Belegkreis: ER" count={18} />
    </div>
    <div className="pl-[33px] pt-[11px] flex flex-col gap-[22px]">
      <div className="flex gap-[22px]">
        <Thumb><Doc1 /></Thumb>
        <Thumb><Doc2 /></Thumb>
        <Thumb selected><Doc3 /></Thumb>
        <Thumb><Doc4 /></Thumb>
        <Thumb><Doc5 /></Thumb>
      </div>
      <div className="flex gap-[22px]">
        <Thumb><Doc6 /></Thumb>
        <Thumb><Doc7 /></Thumb>
        <Thumb><Doc8 /></Thumb>
        <Thumb><Page /></Thumb>
        <Thumb><Doc10 /></Thumb>
      </div>
      <div className="flex gap-[22px]">
        <div className="flex gap-[2px]">
          <Thumb><BauLuger /></Thumb>
          <Thumb pin={false}><Blank2 /></Thumb>
        </div>
        <Thumb><Doc11 /></Thumb>
        <Thumb><Doc12 /></Thumb>
        <Thumb><Doc13 /></Thumb>
      </div>
    </div>
  </div>
);

export default function App() {
  return (
    <div className="relative w-[1296px] h-[865px] bg-[#e3e3e3] overflow-hidden flex flex-col font-['Open_Sans',sans-serif] text-[11.5px] tracking-[-0.15px]">
      {/* title bar */}
      <div className="h-[26px] flex justify-between pr-[6px] shrink-0">
        <div className="pl-[7px] pt-[5px] text-[12.5px] tracking-normal text-[#444]">RZL Scan-Manager</div>
        <div className="flex h-[20px] border-x border-b border-[#aaaaaa] rounded-b-[4px] overflow-hidden">
          <div className="w-[26px] border-r border-[#aaaaaa] flex items-end justify-center pb-[5px]">
            <div className="w-[8px] h-[2px] bg-[#666]" />
          </div>
          <div className="w-[25px] flex items-center justify-center pb-[2px]">
            <div className="w-[9px] h-[8px] border border-[#666] border-t-2" />
          </div>
          <div className="w-[45px] bg-[#c75050] flex items-center justify-center">
            <svg width="9" height="9" viewBox="0 0 9 9">
              <path d="M1 1 L8 8 M8 1 L1 8" stroke="#fff" strokeWidth="2" />
            </svg>
          </div>
        </div>
      </div>

      {/* tab strip and ribbon */}
      <div className="mx-[2px] bg-white h-[114px] shrink-0 flex flex-col">
        <div className="h-[24px] flex items-end pl-[1px]">
          <div className="w-[36px] h-[23px] border-x border-t border-[#d6d6d6] rounded-t-[2px] bg-white -mb-px relative z-10" />
        </div>
        <Ribbon />
      </div>

      {/* tree + documents */}
      <div className="flex h-[705px] pt-[2px] shrink-0">
        <div className="w-[3px] shrink-0" />
        <Tree />
        <div className="w-[4px] shrink-0" />
        <div className="flex-1 flex flex-col mr-px">
          <div className="flex h-[686px]">
            <Documents />
            <div className="w-[17px] bg-[#f0f0f0] flex flex-col text-[#999] shrink-0">
              <div className="h-[17px] flex items-center justify-center">
                <Chevron d="M1 6.5 L5 3 L9 6.5" />
              </div>
              <div className="h-[358px] bg-[#cdcdcd]" />
              <div className="mt-auto h-[17px] flex items-center justify-center">
                <Chevron d="M1 3.5 L5 7 L9 3.5" />
              </div>
            </div>
          </div>
          <div className="h-[17px] bg-[#f0f0f0] flex items-center justify-between px-[3px] text-[#bbb]">
            <Chevron d="M6.5 1 L3 5 L6.5 9" />
            <Chevron d="M3.5 1 L7 5 L3.5 9" className="mr-[19px]" />
          </div>
        </div>
      </div>

      {/* status bar */}
      <div className="flex-1 flex justify-end items-end pr-[1px] pb-[1px]">
        <svg width="11" height="12" viewBox="0 0 11 12">
          <path d="M9 0h2v2H9zM5 5h2v2H5zM9 5h2v2H9zM1 10h2v2H1zM5 10h2v2H5zM9 10h2v2H9z" fill="#555" />
        </svg>
      </div>

      <ContextMenu />
    </div>
  );
}
